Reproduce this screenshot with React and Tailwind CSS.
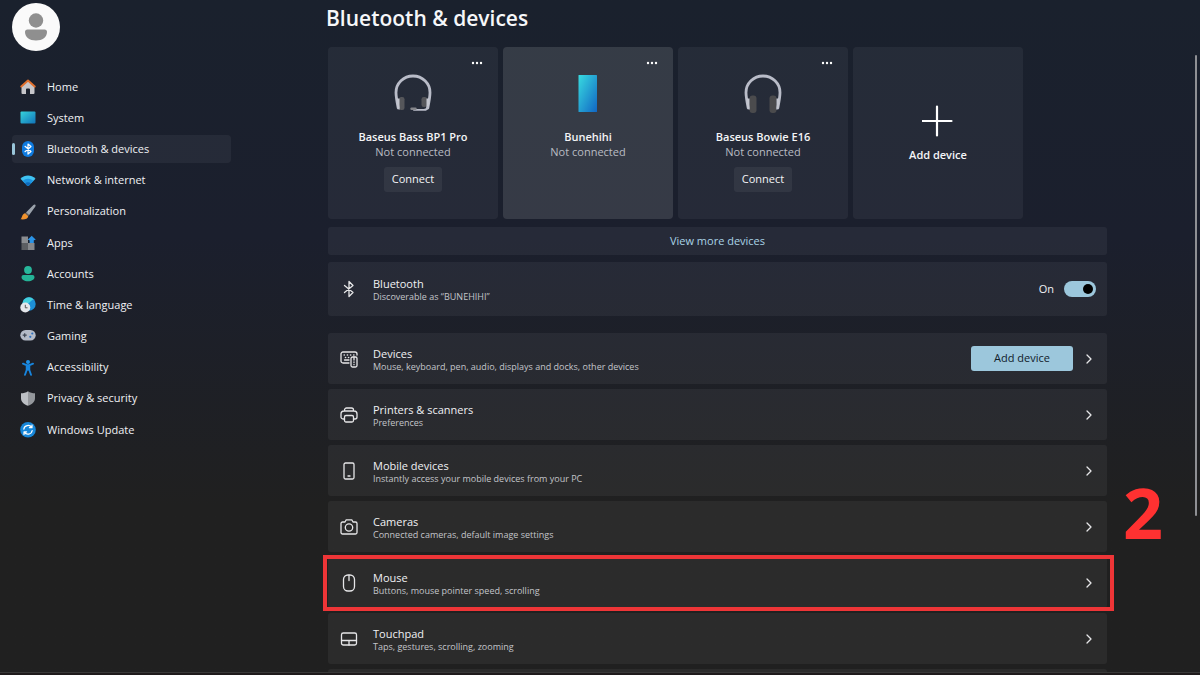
import React, { useState } from "react";

/* ================== Sidebar icons ================== */

const HomeIcon = () => (
  <svg viewBox="0 0 16 16" className="size-4">
    <path d="M8 2 1.500 7.500V14a1 1 0 0 0 1 1H6v-4.500a1 1 0 0 1 1-1h2a1 1 0 0 1 1 1V15h3.500a1 1 0 0 0 1-1V7.500z" fill="#c6c6ca" />
    <path d="M1.300 7.600 8 1.600l6.700 6" fill="none" stroke="#e0702e" strokeWidth="2" strokeLinecap="round" strokeLinejoin="round" />
  </svg>
);

const SystemIcon = () => (
  <svg viewBox="0 0 16 16" className="size-4">
    <defs>
      <linearGradient id="sys" x1="0" y1="0" x2="1" y2="1">
        <stop offset="0" stopColor="#35d3dc" />
        <stop offset="1" stopColor="#1273b8" />
      </linearGradient>
    </defs>
    <rect x="0.5" y="1.500" width="15" height="12" rx="1" fill="url(#sys)" />
  </svg>
);

const BluetoothBadge = () => (
  <svg viewBox="0 0 16 16" className="size-4">
    <rect x="2" y="0" width="12" height="16" rx="6" fill="#0f7be0" />
    <path d="m5 5.300 6 5.200L8 13V3l3 2.500-6 5.200" fill="none" stroke="#fff" strokeWidth="1.200" strokeLinejoin="round" strokeLinecap="round" />
  </svg>
);

const NetworkIcon = () => (
  <svg viewBox="0 0 16 16" className="size-4">
    <path d="M0.500 5.700C4.800 1.400 11.200 1.400 15.500 5.700L8.700 12.700a1 1 0 0 1-1.400 0z" fill="#3fc2f2" />
    <path d="M2.700 7.900C5.800 5.100 10.200 5.100 13.300 7.900L8.700 12.700a1 1 0 0 1-1.400 0z" fill="#1d94e0" />
    <path d="M5 10.300c1.800-1.500 4.200-1.500 6 0l-2.300 2.400a1 1 0 0 1-1.400 0z" fill="#1069b8" />
  </svg>
);

const BrushIcon = () => (
  <svg viewBox="0 0 16 16" className="size-4">
    <path d="M15.300 0.800c0.500 0.500 0.300 1.300-0.100 2L9 11.300 6 8.600l7.400-7.500c0.600-0.600 1.400-0.800 1.900-0.300z" fill="#9aa2ab" />
    <path d="m6 8.600 3 2.700-1 1.200-3.200-2.800z" fill="#6b6259" />
    <path d="M4.900 9.300 8.200 12.200c-0.300 2.800-3.500 3.500-7.700 3.100 1.800-1.200 1.200-5 4.400-6z" fill="#f0922e" />
  </svg>
);

const AppsIcon = () => (
  <svg viewBox="0 0 16 16" className="size-4">
    <rect x="1.500" y="1.500" width="6.500" height="6.500" fill="#8b8d91" />
    <rect x="1.500" y="8" width="6.500" height="7" fill="#5c5e62" />
    <rect x="8" y="8" width="6.500" height="7" fill="#86888c" />
    <path d="M11.700 0.800 15.800 4.800 13.800 5.300V8H9.600V5.300L7.600 4.800z" fill="#2a93e6" />
  </svg>
);

const AccountsIcon = () => (
  <svg viewBox="0 0 16 16" className="size-4">
    <circle cx="8" cy="4" r="3.900" fill="#27b79b" />
    <path d="M3.500 9h9a2 2 0 0 1 2 2c0 2.600-2.700 4.200-6.500 4.200S1.500 13.600 1.500 11a2 2 0 0 1 2-2z" fill="#24b396" />
  </svg>
);

const TimeIcon = () => (
  <svg viewBox="0 0 16 16" className="size-4">
    <circle cx="9" cy="7" r="6.700" fill="#1d8fd6" />
    <path d="M9 0.300a6.700 6.700 0 0 0-6.700 6.700h3.500L9 6l2-2 2.500-1.700A6.700 6.700 0 0 0 9 0.300z" fill="#44cfdc" />
    <circle cx="5.300" cy="10.500" r="5" fill="#e4e6ea" />
    <path d="M5.300 7.800v3h2.200" fill="none" stroke="#555" strokeWidth="1" />
  </svg>
);

const GamingIcon = () => (
  <svg viewBox="0 0 16 16" className="size-4">
    <rect x="0.300" y="2" width="15.400" height="10.500" rx="5.200" fill="#b4bbc8" />
    <path d="M4.700 5.200v4M2.700 7.200h4" stroke="#3d4552" strokeWidth="1.200" />
    <circle cx="12.300" cy="5.500" r="1.100" fill="#2c6fc0" />
    <circle cx="10.300" cy="8.800" r="1.100" fill="#2c6fc0" />
  </svg>
);

const AccessibilityIcon = () => (
  <svg viewBox="0 0 16 16" className="size-4">
    <circle cx="8" cy="2" r="2" fill="#1f93ea" />
    <path d="m3 3.700 3.500 1.500h3L13 3.700M6.700 5v5L5 14.800M9.300 5v5l1.700 4.800" fill="none" stroke="#1785de" strokeWidth="1.900" strokeLinecap="round" strokeLinejoin="round" />
    <path d="M6 5h4v5.500H6z" fill="#1785de" />
  </svg>
);

const PrivacyIcon = () => (
  <svg viewBox="0 0 16 16" className="size-4">
    <path d="M8 0.300c2 1.500 4.500 2 7 2v5c0 3.600-2.800 6-7 7.500z" fill="#94979c" />
    <path d="M8 0.300c-2 1.500-4.500 2-7 2v5c0 3.600 2.800 6 7 7.500z" fill="#bcbfc4" />
  </svg>
);

const UpdateIcon = () => (
  <svg viewBox="0 0 16 16" className="size-4">
    <circle cx="8" cy="7.800" r="7.800" fill="#1787d9" />
    <path d="M3.800 7.100a4.300 4.300 0 0 1 7.900-1.600M12.200 8.500a4.300 4.300 0 0 1-7.900 1.600M12 3.100v2.600H9.400M4 12.500V9.900h2.600" fill="none" stroke="#fff" strokeWidth="1.200" strokeLinecap="round" strokeLinejoin="round" />
  </svg>
);

/* ================== Row icons ================== */

function LineIcon({ children }) {
  return (
    <svg viewBox="0 0 18 18" className="size-[18px] shrink-0" fill="none" stroke="#e6e6e8" strokeWidth="1.300" strokeLinecap="round" strokeLinejoin="round">
      {children}
    </svg>
  );
}

const BluetoothGlyph = () => (
  <LineIcon><path d="m4.500 5.500 8.500 7L9 16.500v-15l4 4-8.500 7" /></LineIcon>
);

const DevicesGlyph = () => (
  <LineIcon>
    <path d="M9 13H3a2 2 0 0 1-2-2V4a2 2 0 0 1 2-2h12a2 2 0 0 1 2 2v1M4.500 10H9" />
    <path d="M4.200 5h.1M7.400 5h.1M10.600 5h.1M13.800 5h.1M5.500 7.500h.1M8.500 7.500h.1" strokeWidth="1.600" />
    <rect x="11" y="7" width="6" height="10" rx="1.500" />
    <path d="M14 7v3M14 12v.5M14 14.500v.2" />
  </LineIcon>
);

const PrinterGlyph = () => (
  <LineIcon>
    <path d="M4.500 5V4a2 2 0 0 1 2-2h5a2 2 0 0 1 2 2v1M4.500 13H3a2 2 0 0 1-2-2V8a3 3 0 0 1 3-3h10a3 3 0 0 1 3 3v3a2 2 0 0 1-2 2h-1.500" />
    <rect x="4.500" y="9.500" width="9" height="6.500" rx="1.500" />
  </LineIcon>
);

const PhoneGlyph = () => (
  <LineIcon>
    <rect x="4" y="1" width="10" height="16" rx="1.500" />
    <path d="M8 14h2" />
  </LineIcon>
);

const CameraGlyph = () => (
  <LineIcon>
    <path d="M2.500 4H5l1.200-2.200h5.600L13 4h2.500A1.500 1.500 0 0 1 17 5.500v9a1.500 1.500 0 0 1-1.500 1.500h-13A1.500 1.500 0 0 1 1 14.500v-9A1.500 1.500 0 0 1 2.500 4z" />
    <circle cx="9" cy="9.500" r="3.700" />
  </LineIcon>
);

const MouseGlyph = () => (
  <LineIcon>
    <rect x="3.500" y="1" width="11" height="16" rx="4.500" />
    <path d="M9 1.500v5" />
  </LineIcon>
);

const TouchpadGlyph = () => (
  <LineIcon>
    <rect x="1.500" y="3" width="15" height="12" rx="1.800" />
    <path d="M1.500 10.500h15M9 10.500V15" />
  </LineIcon>
);

const Chevron = () => (
  <svg viewBox="0 0 8 10" className="h-2.5 w-2 shrink-0" fill="none" stroke="#e6e6e8" strokeWidth="1.300" strokeLinecap="round" strokeLinejoin="round">
    <path d="m2 1 4 4-4 4" />
  </svg>
);

/* ================== Device pictures ================== */

function Headphones({ mic }) {
  return (
    <svg viewBox="0 0 40 40" className="size-10">
      {mic ? (
        <>
          <rect x="6" y="24" width="5.500" height="13" rx="2.200" fill="#55565a" />
          <rect x="28.500" y="24" width="5.500" height="10" rx="2.200" fill="#55565a" />
        </>
      ) : (
        <>
          <rect x="6.500" y="22.500" width="7" height="17.500" rx="3" fill="#4b4b4d" />
          <rect x="26.500" y="22.500" width="7" height="17.500" rx="3" fill="#4b4b4d" />
        </>
      )}
      <path d="M5.200 35C4 29 3 24 3 19.500a17 16.500 0 0 1 34 0C37 24 36 29 34.800 35" fill="none" stroke="#b9bcc8" strokeWidth="2.800" strokeLinecap="round" />
      <path d="M3.500 25.500 6.500 25.500V37q-2-1-2.300-3zM36.500 25.500 33.500 25.500V37q2-1 2.300-3z" fill="#c3c6cf" />
      {mic && (
        <>
          <path d="M34.800 34c-.4 2.200-1.800 2.900-3.800 2.900H21" fill="none" stroke="#b9bcc8" strokeWidth="1.800" strokeLinecap="round" />
          <path d="M18.500 35.800h4" stroke="#85868b" strokeWidth="2.400" strokeLinecap="round" />
        </>
      )}
    </svg>
  );
}

const PhonePicture = () => (
  <svg viewBox="0 0 40 40" className="size-10">
    <defs>
      <linearGradient id="phone" x1="0" y1="0" x2="1" y2="1">
        <stop offset="0" stopColor="#38dbe0" />
        <stop offset="1" stopColor="#1166c4" />
      </linearGradient>
    </defs>
    <rect x="10.500" y="2" width="18.500" height="37" rx="0.500" fill="url(#phone)" />
  </svg>
);

/* ================== Data ================== */

const NAV = [
  { label: "Home", Icon: HomeIcon },
  { label: "System", Icon: SystemIcon },
  { label: "Bluetooth & devices", Icon: BluetoothBadge },
  { label: "Network & internet", Icon: NetworkIcon },
  { label: "Personalization", Icon: BrushIcon },
  { label: "Apps", Icon: AppsIcon },
  { label: "Accounts", Icon: AccountsIcon },
  { label: "Time & language", Icon: TimeIcon },
  { label: "Gaming", Icon: GamingIcon },
  { label: "Accessibility", Icon: AccessibilityIcon },
  { label: "Privacy & security", Icon: PrivacyIcon },
  { label: "Windows Update", Icon: UpdateIcon },
];

const DEVICES = [
  { name: "Baseus Bass BP1 Pro", picture: <Headphones mic />, connect: true },
  { name: "Bunehihi", picture: <PhonePicture />, hover: true },
  { name: "Baseus Bowie E16", picture: <Headphones />, connect: true },
];

const ROWS = [
  { title: "Devices", text: "Mouse, keyboard, pen, audio, displays and docks, other devices", Icon: DevicesGlyph, add: true },
  { title: "Printers & scanners", text: "Preferences", Icon: PrinterGlyph },
  { title: "Mobile devices", text: "Instantly access your mobile devices from your PC", Icon: PhoneGlyph },
  { title: "Cameras", text: "Connected cameras, default image settings", Icon: CameraGlyph },
  { title: "Mouse", text: "Buttons, mouse pointer speed, scrolling", Icon: MouseGlyph, step: 2 },
  { title: "Touchpad", text: "Taps, gestures, scrolling, zooming", Icon: TouchpadGlyph },
];

/* ================== Components ================== */

function Sidebar() {
  return (
    <aside className="w-[231px] shrink-0 pl-3 pt-[3px]">
      <div className="grid size-12 place-items-center rounded-full bg-[#fafafa]">
        <svg viewBox="0 0 24 28" className="h-7 w-6" fill="#8f8f8f">
          <circle cx="12" cy="7.500" r="7.200" />
          <path d="M3.500 16.500h17a2.500 2.500 0 0 1 2.500 2.500c0 5-4.500 8.500-11 8.500S1 24 1 19a2.500 2.500 0 0 1 2.500-2.500z" />
        </svg>
      </div>
      <nav className="mt-[22px] flex h-[371px] flex-col justify-between">
        {NAV.map(({ label, Icon }) => {
          const active = label === "Bluetooth & devices";
          return (
            <a
              key={label}
              href="#"
              aria-current={active ? "page" : undefined}
              className={`relative flex h-7 items-center gap-[11px] rounded pl-2 text-[11px] text-[#f0f1f4] ${
                active ? "bg-white/5" : ""
              }`}
            >
              {active && <span className="absolute left-0 top-2 h-3 w-[3px] rounded-full bg-[#9ac6da]" />}
              <Icon />
              {label}
            </a>
          );
        })}
      </nav>
    </aside>
  );
}

function DeviceCard({ name, picture, connect, hover }) {
  return (
    <article className={`relative flex h-[172px] w-[170px] flex-col items-center rounded-sm pt-[26px] ${hover ? "bg-white/12" : "bg-white/5"}`}>
      <button type="button" aria-label={`More options for ${name}`} className="absolute right-[11px] top-2 grid h-4 w-5 place-items-center">
        <svg viewBox="0 0 12 4" className="h-1 w-3" fill="#fff">
          <circle cx="2" cy="2" r="1.200" />
          <circle cx="6" cy="2" r="1.200" />
          <circle cx="10" cy="2" r="1.200" />
        </svg>
      </button>
      {picture}
      <h2 className="mt-4 text-[11px] font-semibold leading-4 text-[#f4f5f7]">{name}</h2>
      <p className="text-[11px] leading-[14px] text-[#b9bcc3]">Not connected</p>
      {connect && (
        <button type="button" className="mt-2 h-[25px] w-[58px] rounded-[3px] bg-white/6 text-[11px] text-[#f4f5f7]">
          Connect
        </button>
      )}
    </article>
  );
}

function RowText({ title, text }) {
  return (
    <span className="flex-1 pt-0.5 text-left">
      <span className="block text-[11px] leading-[14px] text-[#f0f1f4]">{title}</span>
      <span className="block text-[9px] leading-3 text-[#c3c5ca]">{text}</span>
    </span>
  );
}

function SettingRow({ title, text, Icon, add, step }) {
  return (
    <li className="relative flex h-[51px] items-center rounded-[3px] bg-white/5 pr-[14px]">
      <a href="#" className="flex flex-1 items-center gap-[15px] pl-3">
        <Icon />
        <RowText title={title} text={text} />
      </a>
      {add && (
        <button type="button" className="mr-3 h-[25px] w-[102px] rounded-[3px] bg-[#9cc7dc] text-[11px] text-[#10202a]">
          Add device
        </button>
      )}
      <Chevron />
      {step && (
        <>
          <span className="absolute -bottom-[3px] -left-[5px] -right-[7px] -top-[2px] border-4 border-[#ee3537]" />
          <span className="absolute bottom-[61px] left-full ml-4 text-[70px] font-bold leading-[70px] text-[#ff3131]">{step}</span>
        </>
      )}
    </li>
  );
}

export default function App() {
  const [on, setOn] = useState(true);

  return (
    <div className="relative flex h-screen overflow-hidden bg-linear-to-b from-[#1a212d] via-[#1b1f2d] via-35% to-[#202020] to-75% font-['Open_Sans','Noto_Sans',sans-serif]">
      <Sidebar />

      <main className="ml-[97px] mr-[93px] min-w-0 flex-1 pt-1">
        <h1 className="-ml-0.5 text-[21px] font-semibold leading-7 text-[#f6f7f9]">Bluetooth &amp; devices</h1>

        <section className="mt-[15px] flex gap-[5px]">
          {DEVICES.map((d) => (
            <DeviceCard key={d.name} {...d} />
          ))}
          <button type="button" className="flex h-[172px] w-[170px] flex-col items-center rounded-sm bg-white/5 pt-[58px] text-[11px] font-semibold text-[#f4f5f7]">
            <svg viewBox="0 0 32 32" className="size-8" stroke="#fff" strokeWidth="2.200" strokeLinecap="round">
              <path d="M15 1.500v29M.500 16h29" />
            </svg>
            <span className="mt-[10px] leading-4">Add device</span>
          </button>
        </section>

        <button type="button" className="mt-2 h-7 w-full rounded-[3px] bg-white/5 text-[11px] text-[#a9d3e6]">
          View more devices
        </button>

        <section className="mt-[7px] flex h-[54px] items-center gap-[15px] rounded-[3px] bg-white/5 pl-3 pr-[11px]">
          <BluetoothGlyph />
          <RowText title="Bluetooth" text="Discoverable as “BUNEHIHI”" />
          <label className="flex items-center gap-[10px] text-[11px] text-[#f0f1f4]">
            On
            <input
              type="checkbox"
              role="switch"
              checked={on}
              onChange={() => setOn(!on)}
              className="h-4 w-8 appearance-none rounded-full bg-[#9cc7dc] p-[3px] before:block before:size-[10px] before:rounded-full before:bg-black checked:before:ml-auto"
            />
          </label>
        </section>

        <ul className="mt-[17px] flex flex-col gap-[5px]">
          {ROWS.map((row) => (
            <SettingRow key={row.title} {...row} />
          ))}
          <li className="h-[51px] rounded-[3px] bg-white/5" />
        </ul>
      </main>

      {/* scrollbar thumb */}
      <div className="absolute right-[3px] top-[55px] h-[461px] w-[2px] rounded-full bg-[#8f9094]" />
      {/* window edge */}
      <div className="absolute inset-x-0 bottom-0 h-[3px] border-t border-[#383838] bg-[#1e1a1b]" />
    </div>
  );
}
